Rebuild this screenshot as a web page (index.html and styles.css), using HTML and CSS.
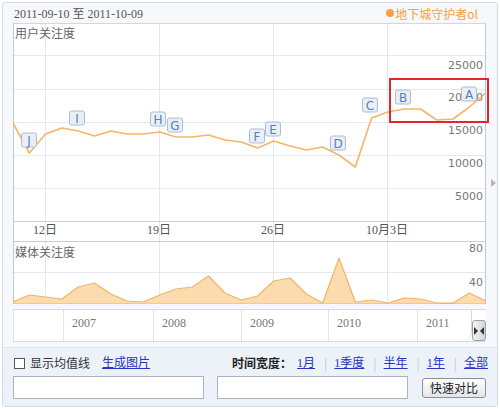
FILE: index.html
```html
<!DOCTYPE html>
<html lang="zh-CN">
<head>
<meta charset="utf-8">
<title>用户关注度</title>
<link rel="stylesheet" href="styles.css">
</head>
<body>
<div class="widget">
  <div class="head">
    <span class="range">2011-09-10 至 2011-10-09</span>
    <span class="legend"><span class="dot"></span>地下城守护者ol</span>
  </div>
  <div class="charts">
    <svg class="plot" width="473" height="281" viewBox="0 0 473 281">
      <rect class="bg" x="0" y="0" width="473" height="281"/>
      <g class="grid">
        <line x1="0" y1="32.5" x2="473" y2="32.5"/>
        <line x1="0" y1="66.5" x2="473" y2="66.5"/>
        <line x1="0" y1="99.5" x2="473" y2="99.5"/>
        <line x1="0" y1="132.5" x2="473" y2="132.5"/>
        <line x1="0" y1="165.5" x2="473" y2="165.5"/>
        <line x1="0" y1="249.5" x2="473" y2="249.5"/>
        <line x1="32.5" y1="0" x2="32.5" y2="281"/>
        <line x1="146.5" y1="0" x2="146.5" y2="281"/>
        <line x1="260.5" y1="0" x2="260.5" y2="281"/>
        <line x1="374.5" y1="0" x2="374.5" y2="281"/>
      </g>
      <g class="axis">
        <line x1="0" y1="198.5" x2="473" y2="198.5"/>
        <line x1="0" y1="218.5" x2="473" y2="218.5"/>
        <line x1="0" y1="280.5" x2="473" y2="280.5"/>
      </g>
      <line class="frame-top" x1="0" y1="0.5" x2="473" y2="0.5"/>
      <line class="frame-side" x1="0.5" y1="0" x2="0.5" y2="281"/>
      <line class="frame-side" x1="472.5" y1="0" x2="472.5" y2="281"/>

      <text class="title" x="2" y="15">用户关注度</text>
      <text class="title" x="2" y="234">媒体关注度</text>

      <g class="ylab">
        <text x="470" y="46">25000</text>
        <text x="470" y="78">20000</text>
        <text x="470" y="111">15000</text>
        <text x="470" y="144">10000</text>
        <text x="470" y="177">5000</text>
        <text x="470" y="229">80</text>
        <text x="470" y="263">40</text>
      </g>
      <g class="xlab">
        <text x="32" y="211">12日</text>
        <text x="146" y="211">19日</text>
        <text x="260" y="211">26日</text>
        <text x="374" y="211">10月3日</text>
      </g>

      <polygon class="media" points="0,281 0,279 16.3,272 32.6,274 48.9,276 65.2,264 81.5,260 97.8,271 114.1,278 130.4,279 146.7,272 163,266 179.3,264 195.6,253 211.9,270 228.2,277 244.5,273 260.8,258 277.1,255 293.4,271 309.7,280 326,235 342.3,279 358.6,277 374.9,280 391.2,275 407.5,276 423.8,280 440.1,280 456.4,270 472.7,278 472.7,281"/>

      <polyline class="trend" points="0,100 16.3,130 32.6,111 48.9,105 65.2,108 81.5,113 97.8,108 114.1,111 130.4,111 146.7,109 163,114 179.3,114 195.6,112 211.9,117 228.2,119 244.5,125 260.8,118 277.1,123 293.4,127 309.7,124 326,132 342.3,144 358.6,95 374.9,89 391.2,86 407.5,86 423.8,97 440.1,96 456.4,84 472.7,70"/>

      <g class="mk"><rect x="8.5" y="110" width="15" height="14" rx="2"/><text x="16" y="121.5">J</text></g>
      <g class="mk"><rect x="56.5" y="88" width="15" height="14" rx="2"/><text x="64" y="99.5">I</text></g>
      <g class="mk"><rect x="137.5" y="89" width="15" height="14" rx="2"/><text x="145" y="100.5">H</text></g>
      <g class="mk"><rect x="154.5" y="95" width="15" height="14" rx="2"/><text x="162" y="106.5">G</text></g>
      <g class="mk"><rect x="236.5" y="106" width="15" height="14" rx="2"/><text x="244" y="117.5">F</text></g>
      <g class="mk"><rect x="252.5" y="99" width="15" height="14" rx="2"/><text x="260" y="110.5">E</text></g>
      <g class="mk"><rect x="317.5" y="113" width="15" height="14" rx="2"/><text x="325" y="124.5">D</text></g>
      <g class="mk"><rect x="349.5" y="75" width="15" height="14" rx="2"/><text x="357" y="86.5">C</text></g>
      <g class="mk"><rect x="382.5" y="67" width="15" height="14" rx="2"/><text x="390" y="78.5">B</text></g>
      <g class="mk"><rect x="448.5" y="64" width="15" height="14" rx="2"/><text x="456" y="75.5">A</text></g>
    </svg>
    <div class="side"><span class="arrow"></span></div>
    <div class="highlight"></div>
  </div>
  <div class="timeline">
    <div class="cell w0"></div>
    <div class="cell w1">2007</div>
    <div class="cell w2">2008</div>
    <div class="cell w3">2009</div>
    <div class="cell w4">2010</div>
    <div class="cell w5">2011</div>
    <div class="handle">
      <svg width="10" height="8" viewBox="0 0 10 8"><polygon class="grip" points="0,0 4,4 0,8"/><polygon class="grip" points="10,0 6,4 10,8"/></svg>
    </div>
  </div>
  <div class="controls">
    <div class="row1">
      <span class="box"></span>
      <span class="check-text">显示均值线</span>
      <a class="link gen" href="#">生成图片</a>
      <span class="span-label">时间宽度：</span>
      <a class="link first" href="#">1月</a><span class="sep">|</span>
      <a class="link" href="#">1季度</a><span class="sep">|</span>
      <a class="link" href="#">半年</a><span class="sep">|</span>
      <a class="link" href="#">1年</a><span class="sep">|</span>
      <a class="link" href="#">全部</a>
    </div>
    <div class="row2">
      <input class="field" type="text">
      <input class="field second" type="text">
      <button class="btn" type="button">快速对比</button>
    </div>
  </div>
</div>
</body>
</html>
```
FILE: styles.css
```css
* { box-sizing: border-box; }
html, body {
  margin: 0;
  padding: 0;
  background: #ffffff;
}
body {
  font-family: "Liberation Serif", "Noto Sans CJK SC", serif;
  font-size: 12px;
  color: #333;
}
.widget {
  margin: 2px;
  width: 496px;
  height: 405px;
  border: 1px solid #d3dce8;
  border-radius: 3px;
  background: #f6f8fb;
  overflow: hidden;
}
.head {
  height: 20px;
  display: flex;
  align-items: center;
  justify-content: space-between;
  padding: 0 19px 0 11px;
}
.range {
  color: #555;
  font-size: 12px;
}
.legend {
  display: flex;
  align-items: center;
  color: #f5a23a;
  font-family: "Noto Sans CJK SC", sans-serif;
  font-size: 12px;
}
.dot {
  width: 8px;
  height: 8px;
  border-radius: 50%;
  background: #f5a23a;
  margin-right: 1px;
}
.charts {
  position: relative;
  height: 281px;
  display: flex;
  padding-left: 10px;
}
.plot { display: block; }
.plot .bg { fill: #ffffff; }
.plot .grid line { stroke: #e5e9ef; stroke-width: 1; }
.plot .axis line { stroke: #c8ccd3; stroke-width: 1; }
.plot .frame-top { stroke: #cfd9e6; stroke-width: 1; }
.plot .frame-side { stroke: #b9c9e0; stroke-width: 1; }
.plot .title {
  font-family: "Noto Sans CJK SC", sans-serif;
  font-size: 12px;
  fill: #666;
}
.plot .ylab text {
  font-family: "DejaVu Sans", sans-serif;
  font-size: 11px;
  fill: #777;
  text-anchor: end;
}
.plot .xlab text {
  font-family: "Liberation Serif", "Noto Sans CJK SC", serif;
  font-size: 12px;
  fill: #555;
  text-anchor: middle;
}
.plot .media {
  fill: #fcdcaf;
  stroke: #f1b467;
  stroke-width: 1.2;
  stroke-linejoin: round;
}
.plot .trend {
  fill: none;
  stroke: #f5b565;
  stroke-width: 1.6;
  stroke-linejoin: round;
}
.plot .mk rect {
  fill: #e9eff7;
  stroke: #aebdd2;
  stroke-width: 1;
}
.plot .mk text {
  font-family: "DejaVu Sans", sans-serif;
  font-size: 12px;
  fill: #5a7eb4;
  text-anchor: middle;
}
.side {
  flex: 1;
  display: flex;
  align-items: center;
  justify-content: flex-end;
  padding-right: 1px;
  padding-top: 38px;
}
.arrow {
  width: 0;
  height: 0;
  border-left: 5px solid #b4b8be;
  border-top: 4px solid transparent;
  border-bottom: 4px solid transparent;
}
.highlight {
  position: absolute;
  left: 386px;
  top: 55px;
  width: 100px;
  height: 45px;
  border: 2px solid #e2262b;
}
.timeline {
  margin: 5px 0 0 10px;
  width: 473px;
  height: 33px;
  display: flex;
  background: #ffffff;
  border-top: 1px solid #d6dbe2;
  border-bottom: 1px solid #d6dbe2;
}
.cell {
  height: 100%;
  border-left: 1px solid #e0e4ea;
  padding: 6px 0 0 8px;
  color: #777;
  font-size: 12px;
}
.w0 { width: 50px; }
.w1 { width: 90px; }
.w2 { width: 88px; }
.w3 { width: 87px; }
.w4 { width: 89px; }
.w5 { width: 55px; border-bottom-right-radius: 10px; border-right: 1px solid #d6dbe2; }
.handle {
  width: 14px;
  height: 21px;
  align-self: flex-end;
  margin-bottom: 0;
  border: 1px solid #9aa0a8;
  border-radius: 3px;
  background: linear-gradient(to right, #f2f3f5, #d3d6da);
  display: flex;
  align-items: center;
  justify-content: center;
}
.grip { fill: #333; }
.controls {
  margin-top: 5px;
  height: 60px;
  background: #edf2f9;
  border-top: 1px solid #dde5ef;
  padding: 7px 0 0 10px;
  font-family: "Noto Sans CJK SC", sans-serif;
}
.row1 {
  height: 16px;
  display: flex;
  align-items: center;
  line-height: 16px;
}
.box {
  width: 11px;
  height: 11px;
  margin-left: 1px;
  border: 1px solid #555;
  background: #fff;
}
.check-text {
  margin-left: 5px;
  color: #333;
}
.link {
  color: #2733c2;
  text-decoration: underline;
  font-family: "Liberation Serif", "Noto Sans CJK SC", serif;
}
.gen { margin-left: 12px; }
.span-label {
  margin-left: 82px;
  font-weight: bold;
  color: #222;
}
.first { margin-left: 5px; }
.sep {
  color: #c4c8ce;
  padding: 0 7px 0 9px;
}
.row2 {
  margin-top: 5px;
  display: flex;
  align-items: center;
}
.field {
  width: 191px;
  height: 23px;
  margin: 0;
  border: 1px solid #a9b4c4;
  background: #fff;
  padding: 0;
}
.second { margin-left: 13px; }
.btn {
  margin-left: 14px;
  width: 64px;
  height: 20px;
  padding: 0;
  border: 1px solid #8b9098;
  border-radius: 3px;
  background: linear-gradient(#ffffff, #e3e5e8);
  font-family: "Noto Sans CJK SC", sans-serif;
  font-size: 12px;
  color: #222;
  line-height: 18px;
}
```
